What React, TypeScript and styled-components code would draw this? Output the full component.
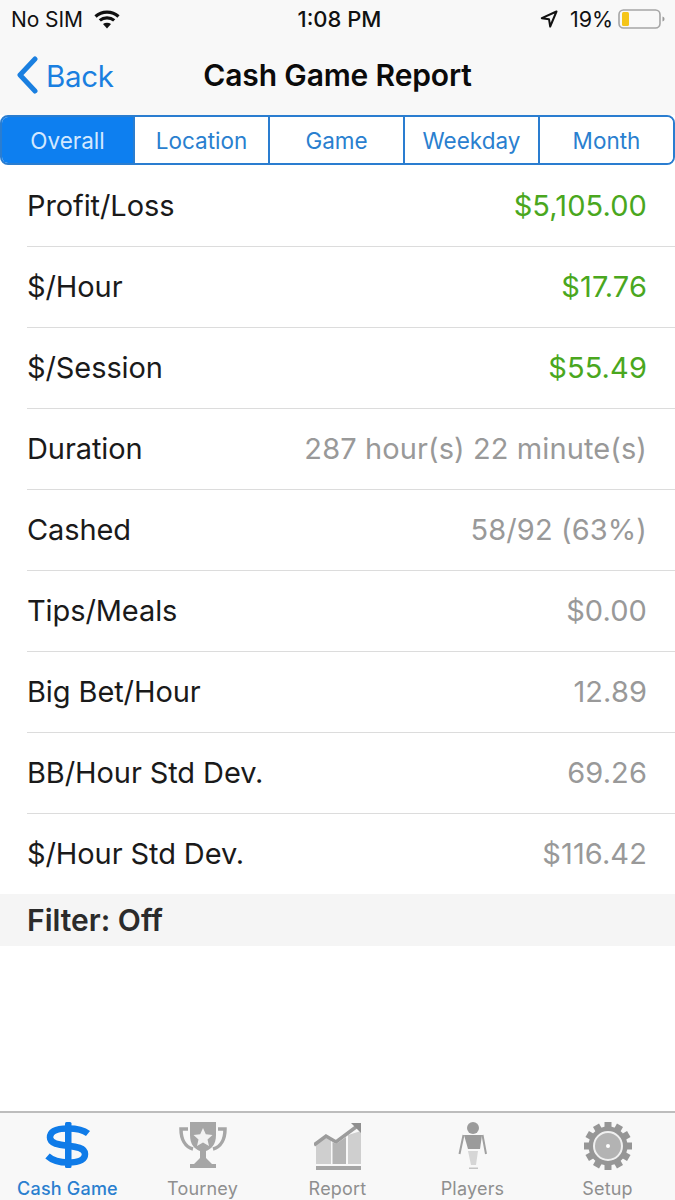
import React from "react";
import styled, { createGlobalStyle } from "styled-components";

const Global = createGlobalStyle`
  html, body { margin: 0; padding: 0; background: #fff; }
  body { font-family: Inter, "Liberation Sans", sans-serif; }
`;
const Page = styled.div`
  width: 675px; height: 1200px; display: flex; flex-direction: column; overflow: hidden; background: #fff;
`;
const Header = styled.div`
  background: #f8f8f8; height: 115px; display: flex; flex-direction: column;
`;
const StatusBar = styled.div`
  height: 38px; display: grid; grid-template-columns: 1fr auto 1fr; align-items: center; padding: 0 10px 0 11px; font-size: 21px; color: #111; letter-spacing: -0.1px;
`;
const StatusLeft = styled.div`display: flex; align-items: center; gap: 11px;`;
const StatusRight = styled.div`
  display: flex; align-items: center; justify-content: flex-end; gap: 5px; font-size: 21.5px;
  & > svg:first-child { margin-right: 7px; }
`;
const Time = styled.div`font-weight: 500; font-size: 22px; letter-spacing: 0; padding-left: 3px;`;
const NavBar = styled.div`
  height: 77px; position: relative; display: flex; align-items: center; justify-content: center;
`;
const BackLink = styled.div`
  position: absolute; left: 16px; top: 18px; display: flex; align-items: center; gap: 8px; color: #1a7fe0; font-size: 29.5px; letter-spacing: -0.3px;
`;
const BackText = styled.span`margin-top: 2px;`;
const Title = styled.div`font-size: 30px; font-weight: 600; color: #0b0b0b; letter-spacing: -0.15px; padding-bottom: 3px;`;
const Segments = styled.div`
  height: 50px; box-sizing: border-box; display: grid; grid-template-columns: 131px 135px 135px 135px 1fr; background: #fff; border: 2px solid #2a7dd0; border-radius: 8px; overflow: hidden;
`;
const Segment = styled.div<{ $active?: boolean }>`
  box-sizing: border-box; display: flex; align-items: center; justify-content: center; font-size: 22.5px; letter-spacing: 0;
  color: ${p => (p.$active ? "#d2e8ff" : "#2a7fcf")};
  background: ${p => (p.$active ? "#0d7ff0" : "#fff")};
  & + & { border-left: 2px solid #2a7dd0; }
`;
const List = styled.div`display: flex; flex-direction: column; padding-top: 1px;`;
const Row = styled.div`
  height: 81px; box-sizing: border-box; margin-left: 27px; padding: 0 28px 1px 0; display: flex; align-items: center; justify-content: space-between;
  border-bottom: 1px solid #dcdcdc; font-size: 29px;
  &:last-child { border-bottom: none; height: 80px; }
`;
const Label = styled.div`color: #1a1a1a; letter-spacing: -0.1px;`;
const Value = styled.div<{ $green?: boolean }>`
  color: ${p => (p.$green ? "#4aa71e" : "#999")}; letter-spacing: 0.1px;
`;
const FilterBar = styled.div`
  height: 52px; background: #f5f5f5; padding-left: 27px; display: flex; align-items: center; font-size: 30px; font-weight: 600; color: #2b2b2b; letter-spacing: 0;
`;
const Spacer = styled.div`flex: 1;`;
const TabBar = styled.div`
  height: 89px; box-sizing: border-box; background: #f8f8f8; border-top: 2px solid #bdbdbd; display: grid; grid-template-columns: repeat(5, 1fr);
`;
const Tab = styled.div<{ $active?: boolean }>`
  display: flex; flex-direction: column; align-items: center; justify-content: flex-start; padding-top: 9px;
  font-size: 18px; line-height: 22px; letter-spacing: 0.2px; color: ${p => (p.$active ? "#2a7fcf" : "#8f8f8f")}; font-weight: ${p => (p.$active ? 500 : 400)};
  & > svg { display: block; margin-bottom: 8px; }
`;

const Wifi = () => (
  <svg width="26" height="20" viewBox="0 0 26 20">
    <path d="M1.5 7.5C7.8 1.6 18.2 1.6 24.5 7.5" stroke="#111" strokeWidth="3.2" fill="none" />
    <path d="M5.8 11.4C9.8 7.9 16.2 7.9 20.2 11.4" stroke="#111" strokeWidth="3.2" fill="none" />
    <path d="M13 19.5L9 15C11.3 13.3 14.7 13.3 17 15Z" fill="#111" />
  </svg>
);
const Arrow = () => (
  <svg width="18" height="18" viewBox="0 0 18 18">
    <path d="M16.5 1.5L1.8 8.2L9 9.2L10.2 16.5Z" fill="none" stroke="#111" strokeWidth="2" strokeLinejoin="round" />
  </svg>
);
const Battery = () => (
  <svg width="47" height="22" viewBox="0 0 47 22">
    <rect x="1" y="2" width="41" height="18" rx="4.5" fill="none" stroke="#a5a5a5" strokeWidth="1.6" />
    <rect x="4" y="4" width="7" height="14" rx="1.5" fill="#f5c518" />
    <path d="M44.500 8.500C46 9 46.500 10 46.500 11C46.500 12 46 13 44.500 13.500Z" fill="#999" />
  </svg>
);
const Chevron = () => (
  <svg width="22" height="38" viewBox="0 0 22 38">
    <path d="M19 3L4 19L19 35" stroke="#1a7fe0" strokeWidth="5" fill="none" strokeLinecap="round" strokeLinejoin="round" />
  </svg>
);
const DollarIcon = () => (
  <svg width="46" height="48" viewBox="0 0 46 48">
    <path d="M43 11.500C38 7.500 31 6.500 23 6.500C13 6.500 5 9 5 15.500C5 28 40 19.500 40 32C40 38.500 32 40.500 23 40.500C15 40.500 8 39 2.500 34"
      fill="none" stroke="#0f7be8" strokeWidth="6.500" />
    <rect x="20" y="0" width="6.500" height="46" rx="1.500" fill="#0f7be8" />
  </svg>
);
const TrophyIcon = () => (
  <svg width="48" height="48" viewBox="0 0 48 48">
    <path d="M11 0H37V13C37 23 32 27 27 29V36L33 42H15L21 36V29C16 27 11 23 11 13Z" fill="#a6a6a6" />
    <path d="M9 7H2C2 17 6 25 14 27" fill="none" stroke="#a6a6a6" strokeWidth="3.500" />
    <path d="M39 7H46C46 17 42 25 34 27" fill="none" stroke="#a6a6a6" strokeWidth="3.500" />
    <rect x="11" y="42" width="26" height="4" fill="#a6a6a6" />
    <path d="M24 6L26.800 12.300L33.500 13L28.500 17.500L30 24L24 20.600L18 24L19.500 17.500L14.500 13L21.200 12.300Z" fill="#f2f2f2" />
  </svg>
);
const ReportIcon = () => (
  <svg width="48" height="48" viewBox="0 0 48 48">
    <path d="M2 21L12 15L17 18V42H2Z" fill="#cfcfcf" />
    <path d="M18.500 20L22 22L32 15V42H18.500Z" fill="#b5b5b5" />
    <path d="M34 13L47 9V42H34Z" fill="#cfcfcf" />
    <path d="M0 23L12 14L22 20L42 5" fill="none" stroke="#9c9c9c" strokeWidth="3.500" />
    <path d="M37 1H47V11Z" fill="#8f8f8f" />
    <rect x="2" y="44" width="45" height="4" fill="#a5a5a5" />
  </svg>
);
const PlayerIcon = () => (
  <svg width="30" height="48" viewBox="0 0 30 48">
    <circle cx="15" cy="6" r="6" fill="#9b9b9b" />
    <path d="M6 13H24L22 27H10Z" fill="#9b9b9b" />
    <path d="M10 29H20L18 43H13Z" fill="#d6d6d6" />
    <path d="M5.500 13L1.500 32M24.500 13L28 32" stroke="#a0a0a0" strokeWidth="2" fill="none" />
    <rect x="11" y="45.500" width="9" height="1.500" fill="#c4c4c4" />
  </svg>
);
const GearIcon = () => {
  const teeth = Array.from({ length: 12 }, (_, i) => i * 30);
  return (
    <svg width="48" height="48" viewBox="0 0 48 48">
      <g transform="translate(24 24)">
        {teeth.map(a => (
          <rect key={a} x="-3.500" y="-24" width="7" height="8" fill="#969696" transform={`rotate(${a})`} />
        ))}
        <circle r="19.500" fill="#969696" />
        <circle r="14" fill="#b3b3b3" stroke="#f0f0f0" strokeWidth="2" />
        <circle r="2" fill="#fff" />
      </g>
    </svg>
  );
};

const rows: [string, string, boolean][] = [
  ["Profit/Loss", "$5,105.00", true],
  ["$/Hour", "$17.76", true],
  ["$/Session", "$55.49", true],
  ["Duration", "287 hour(s) 22 minute(s)", false],
  ["Cashed", "58/92 (63%)", false],
  ["Tips/Meals", "$0.00", false],
  ["Big Bet/Hour", "12.89", false],
  ["BB/Hour Std Dev.", "69.26", false],
  ["$/Hour Std Dev.", "$116.42", false],
];

export default function App() {
  return (
    <Page>
      <Global />
      <Header>
        <StatusBar>
          <StatusLeft>No SIM <Wifi /></StatusLeft>
          <Time>1:08 PM</Time>
          <StatusRight><Arrow /> 19% <Battery /></StatusRight>
        </StatusBar>
        <NavBar>
          <BackLink><Chevron /><BackText>Back</BackText></BackLink>
          <Title>Cash Game Report</Title>
        </NavBar>
      </Header>
      <Segments>
        {["Overall", "Location", "Game", "Weekday", "Month"].map((s, i) => (
          <Segment key={s} $active={i === 0}>{s}</Segment>
        ))}
      </Segments>
      <List>
        {rows.map(([l, v, g]) => (
          <Row key={l}><Label>{l}</Label><Value $green={g}>{v}</Value></Row>
        ))}
      </List>
      <FilterBar>Filter: Off</FilterBar>
      <Spacer />
      <TabBar>
        <Tab $active><DollarIcon />Cash Game</Tab>
        <Tab><TrophyIcon />Tourney</Tab>
        <Tab><ReportIcon />Report</Tab>
        <Tab><PlayerIcon />Players</Tab>
        <Tab><GearIcon />Setup</Tab>
      </TabBar>
    </Page>
  );
}
